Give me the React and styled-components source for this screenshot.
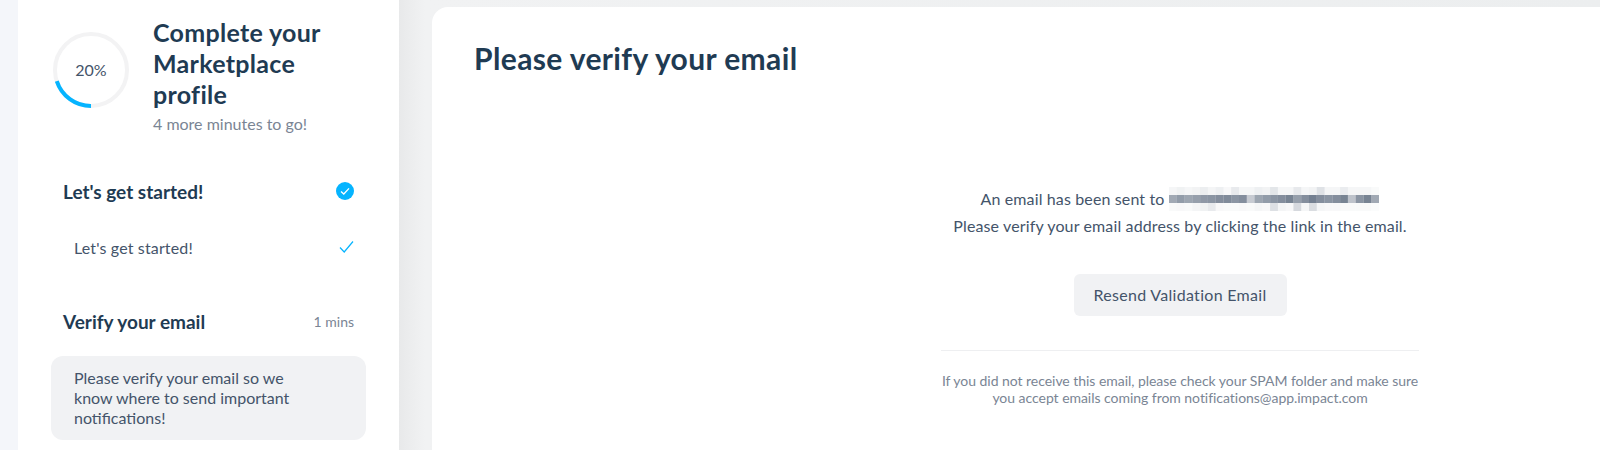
import React from 'react';
import styled, { createGlobalStyle } from 'styled-components';

const GlobalStyle = createGlobalStyle`
  html, body { margin: 0; padding: 0; background: #f4f6fa; }
  body { font-family: "Lato", "Open Sans", sans-serif; overflow: hidden; }
`;

const Page = styled.div`
  display: flex;
  height: 450px;
  width: 1600px;
  padding-left: 18px;
  box-sizing: border-box;
  overflow: hidden;
`;

const Sidebar = styled.aside`
  width: 381px;
  flex-shrink: 0;
  background: #fff;
  padding: 17px 33px 0 33px;
  box-sizing: border-box;
`;

const Gutter = styled.div`
  flex: 1;
  display: flex;
  padding: 7px 0 0 33px;
  background: linear-gradient(90deg, #e8e9ea 0, #f1f2f3 26px, #eceeef 100%);
`;

const Main = styled.main`
  flex: 1;
  background: #fff;
  border-radius: 16px 0 0 0;
  padding: 35px 0 0 42px;
`;

const ProfileHead = styled.div`
  display: flex;
  gap: 24px;
  padding-left: 2px;
`;

const Ring = styled.div`
  position: relative;
  width: 76px;
  height: 76px;
  margin-top: 15px;
  flex-shrink: 0;
`;

const RingLabel = styled.span`
  position: absolute;
  inset: 0;
  padding-bottom: 2px;
  display: flex;
  align-items: center;
  justify-content: center;
  font-size: 16px;
  color: #44546a;
`;

const ProfileTitle = styled.h2`
  margin: 0;
  max-width: 180px;
  font-size: 25px;
  line-height: 31px;
  font-weight: 700;
  color: #1f3b53;
  letter-spacing: 0.3px;
`;

const ProfileSub = styled.p`
  margin: 4px 0 0;
  font-size: 16px;
  line-height: 20px;
  color: #7a8594;
`;

const Section = styled.div`
  display: flex;
  align-items: center;
  justify-content: space-between;
  margin-top: ${({ $top }) => $top}px;
  padding: 0 12px;
  height: 24px;
`;

const SectionName = styled.h3`
  margin: 0;
  font-size: 19px;
  font-weight: 700;
  color: #1f3b53;
`;

const Mins = styled.span`
  font-size: 14px;
  color: #7a8594;
`;

const StepRow = styled.div`
  display: flex;
  align-items: center;
  justify-content: space-between;
  margin-top: 32px;
  padding: 0 12px 0 23px;
  height: 24px;
  font-size: 16px;
  letter-spacing: 0.15px;
  color: #44546a;
`;

const Note = styled.div`
  margin-top: 23px;
  padding: 12px 40px 12px 23px;
  border-radius: 12px;
  background: #f1f2f4;
  font-size: 16px;
  line-height: 20px;
  color: #44546a;
`;

const MainTitle = styled.h1`
  margin: 0;
  font-size: 30px;
  line-height: 32px;
  font-weight: 700;
  letter-spacing: 0.38px;
  color: #1f3b53;
`;

const Body = styled.div`
  width: 478px;
  margin: 112px 0 0 467px;
  text-align: center;
`;

const Line = styled.p`
  margin: 0;
  font-size: 16px;
  line-height: 26.5px;
  height: 26.5px;
  letter-spacing: 0.13px;
  color: #44546a;
  display: flex;
  justify-content: center;
  align-items: center;
  gap: 5px;
`;

const ResendButton = styled.button`
  display: block;
  margin: 35px auto 0;
  width: 213px;
  height: 42px;
  border: 0;
  border-radius: 6px;
  background: #f1f2f4;
  font-family: inherit;
  font-size: 16px;
  letter-spacing: 0.3px;
  color: #44546a;
  padding-bottom: 3px;
`;

const Divider = styled.hr`
  margin: 34px 0 0;
  border: 0;
  border-top: 1px solid #eeeff1;
`;

const Footnote = styled.p`
  margin: 21px 0 0;
  font-size: 14px;
  line-height: 17px;
  letter-spacing: -0.04px;
  white-space: nowrap;
  color: #7a8594;
`;

const mosaicRows = [
  '0.05 0.08 0.05 0.07 0.1 0.06 0.09 0.04 0.12 0.05 0.05 0.09 0.07 0.15 0.05 0.05 0.13 0.05 0.07 0.17 0.05 0.05 0.11 0.05 0.05 0.05 0.03',
  '0.5 0.58 0.52 0.56 0.6 0.62 0.66 0.68 0.62 0.66 0.3 0.52 0.58 0.62 0.66 0.72 0.56 0.66 0.74 0.66 0.62 0.66 0.72 0.35 0.62 0.72 0.5',
  '0.03 0.04 0.03 0.06 0.08 0.12 0.04 0.03 0.03 0.04 0.03 0.05 0.04 0.18 0.06 0.04 0.22 0.05 0.2 0.05 0.04 0.04 0.03 0.03 0.03 0.03 0.02',
].map((r) => r.split(' ').map(Number));

const EmailMosaic = () => (
  <svg width="210" height="24" viewBox="0 0 216 24" preserveAspectRatio="none" aria-hidden="true">
    {mosaicRows.map((row, y) =>
      row.map((o, x) => (
        <rect key={`${x}-${y}`} x={x * 8} y={y * 8} width="8" height="8" fill="#44546a" opacity={o} />
      ))
    )}
  </svg>
);

const ProgressRing = () => (
  <svg width="76" height="76" viewBox="0 0 76 76">
    <circle cx="38" cy="38" r="36" fill="none" stroke="#f3f3f4" strokeWidth="4" />
    <path d="M3.8 49.1 A36 36 0 0 0 38 74" fill="none" stroke="#05b4ff" strokeWidth="4" />
  </svg>
);

const CheckBadge = () => (
  <svg width="18" height="18" viewBox="0 0 18 18">
    <circle cx="9" cy="9" r="9" fill="#05b4ff" />
    <path d="M5 9.4 L7.8 12 L13 6.4" fill="none" stroke="#fff" strokeWidth="1.3" />
  </svg>
);

const ThinCheck = () => (
  <svg width="15" height="14" viewBox="0 0 15 14">
    <path d="M1 7.5 L5.2 12 L14 1.5" fill="none" stroke="#05b4ff" strokeWidth="1.2" />
  </svg>
);

export default function App() {
  return (
    <>
      <GlobalStyle />
      <Page>
        <Sidebar>
          <ProfileHead>
            <Ring>
              <ProgressRing />
              <RingLabel>20%</RingLabel>
            </Ring>
            <div>
              <ProfileTitle>Complete your Marketplace profile</ProfileTitle>
              <ProfileSub>4 more minutes to go!</ProfileSub>
            </div>
          </ProfileHead>

          <Section $top={45}>
            <SectionName>Let's get started!</SectionName>
            <CheckBadge />
          </Section>
          <StepRow>
            Let's get started!
            <ThinCheck />
          </StepRow>

          <Section $top={50}>
            <SectionName>Verify your email</SectionName>
            <Mins>1 mins</Mins>
          </Section>
          <Note>Please verify your email so we know where to send important notifications!</Note>
        </Sidebar>

        <Gutter>
          <Main>
            <MainTitle>Please verify your email</MainTitle>
            <Body>
              <Line>
                An email has been sent to <EmailMosaic />
              </Line>
              <Line>Please verify your email address by clicking the link in the email.</Line>
              <ResendButton>Resend Validation Email</ResendButton>
              <Divider />
              <Footnote>
                If you did not receive this email, please check your SPAM folder and make sure
                <br />
                you accept emails coming from notifications@app.impact.com
              </Footnote>
            </Body>
          </Main>
        </Gutter>
      </Page>
    </>
  );
}
